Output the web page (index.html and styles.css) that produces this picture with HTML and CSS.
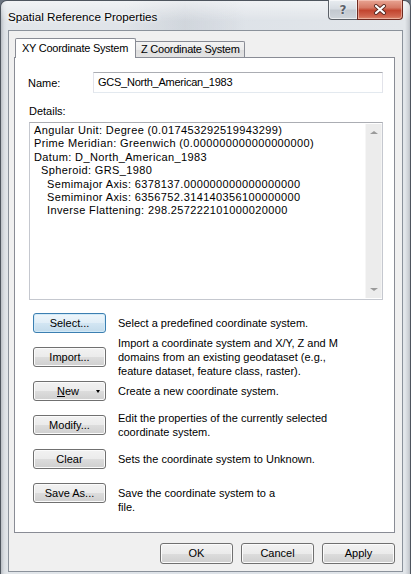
FILE: index.html
```html
<!DOCTYPE html>
<html>
<head>
<meta charset="utf-8">
<link rel="stylesheet" href="styles.css">
</head>
<body>
<div class="window">
  <div class="titlebar">
    <div class="title">Spatial Reference Properties</div>
    <div class="caption-buttons">
      <div class="cap help">?</div>
      <div class="cap close">
        <svg width="14" height="11" viewBox="0 0 14 11">
          <path d="M3 2 L11 9 M11 2 L3 9" stroke="#5a2a22" stroke-width="4" stroke-linecap="round"/>
          <path d="M3 2 L11 9 M11 2 L3 9" stroke="#ffffff" stroke-width="2.2" stroke-linecap="round"/>
        </svg>
      </div>
    </div>
  </div>
  <div class="client">
    <div class="tabstrip">
      <div class="tab active">XY Coordinate System</div>
      <div class="tab">Z Coordinate System</div>
    </div>
    <div class="panel">
      <div class="name-row">
        <label class="name-label">Name:</label>
        <div class="input">GCS_North_American_1983</div>
      </div>
      <div class="details-label">Details:</div>
      <div class="details">
        <div class="details-text">
          <div>Angular Unit: Degree (0.017453292519943299)</div>
          <div>Prime Meridian: Greenwich (0.000000000000000000)</div>
          <div>Datum: D_North_American_1983</div>
          <div class="ind1">Spheroid: GRS_1980</div>
          <div class="ind2">Semimajor Axis: 6378137.000000000000000000</div>
          <div class="ind2">Semiminor Axis: 6356752.314140356100000000</div>
          <div class="ind2">Inverse Flattening: 298.257222101000020000</div>
        </div>
        <div class="scrollbar">
          <span class="arrow-up"></span>
          <span class="arrow-down"></span>
        </div>
      </div>
      <div class="actions">
        <div class="row">
          <div class="btn default">Select...</div>
          <div class="desc">Select a predefined coordinate system.</div>
        </div>
        <div class="row">
          <div class="btn">Import...</div>
          <div class="desc">Import a coordinate system and X/Y, Z and M<br>domains from an existing geodataset (e.g.,<br>feature dataset, feature class, raster).</div>
        </div>
        <div class="row">
          <div class="btn split"><span class="btn-label"><u>N</u>ew</span><span class="drop"></span></div>
          <div class="desc">Create a new coordinate system.</div>
        </div>
        <div class="row">
          <div class="btn">Modify...</div>
          <div class="desc">Edit the properties of the currently selected<br>coordinate system.</div>
        </div>
        <div class="row">
          <div class="btn">Clear</div>
          <div class="desc">Sets the coordinate system to Unknown.</div>
        </div>
        <div class="row">
          <div class="btn">Save As...</div>
          <div class="desc desc-top">Save the coordinate system to a<br>file.</div>
        </div>
      </div>
    </div>
    <div class="footer">
      <div class="btn wide">OK</div>
      <div class="btn wide">Cancel</div>
      <div class="btn wide">Apply</div>
    </div>
  </div>
</div>
</body>
</html>
```
FILE: styles.css
```css
html, body {
  margin: 0;
  padding: 0;
  overflow: hidden;
  background: #6b7480;
}
body {
  font-family: "Liberation Sans", Arial, sans-serif;
  font-size: 11px;
  color: #000;
}
.window {
  width: 411px;
  height: 574px;
  box-sizing: border-box;
  border: 1px solid #4e555e;
  border-bottom: none;
  border-radius: 7px 7px 0 0;
  background: linear-gradient(90deg, #b9bec4 0px, #d9dde2 3px, #e2e6ea 6px, #dde2e8 50%, #e2e6ea 404px, #c8ccd1 408px, #9ca2a9 411px);
  display: flex;
  flex-direction: column;
}
.titlebar {
  height: 29px;
  display: flex;
  justify-content: space-between;
  align-items: flex-start;
  background: linear-gradient(180deg, rgba(255,255,255,0.55), rgba(255,255,255,0) 70%),
              linear-gradient(90deg, rgba(0,0,0,0) 30%, rgba(120,128,140,0.12) 45%, rgba(0,0,0,0) 60%);
  border-radius: 6px 6px 0 0;
}
.title {
  padding: 8px 0 0 7px;
  font-size: 11.7px;
  line-height: 15px;
  color: #000;
  text-shadow: 0 0 6px #fff, 0 0 3px #fff;
}
.caption-buttons {
  display: flex;
  margin-right: 7px;
  margin-top: -1px;
}
.cap {
  height: 20px;
  box-sizing: border-box;
  display: flex;
  align-items: center;
  justify-content: center;
  border: 1px solid #5c6168;
  border-top: none;
}
.help {
  width: 29px;
  border-right: none;
  border-radius: 0 0 0 4px;
  background: linear-gradient(180deg, #e9edf1 0%, #d7dce2 45%, #c3c9d0 55%, #cfd5db 100%);
  box-shadow: inset 0 0 0 1px rgba(255,255,255,0.6);
  font-family: "DejaVu Sans", sans-serif;
  font-weight: bold;
  font-size: 12px;
  color: #5a6069;
  text-shadow: 0 0 2px #fff;
}
.close {
  width: 46px;
  border-radius: 0 0 4px 0;
  border-color: #6e2a20;
  background: linear-gradient(180deg, #e8a493 0%, #d67a66 40%, #c2452f 55%, #d0654f 85%, #dd8a6e 100%);
  box-shadow: inset 0 0 0 1px rgba(255,220,210,0.5);
}
.client {
  flex: 1;
  margin: 0 7px 2px 7px;
  border: 1px solid #8b929b;
  background: #f0f0f0;
  padding: 7px 7px 0 5px;
  display: flex;
  flex-direction: column;
}
.tabstrip {
  display: flex;
  align-items: flex-end;
  height: 19px;
  margin-left: 1px;
}
.tab {
  box-sizing: border-box;
  height: 16px;
  padding: 0 4px 0 5px;
  border: 1px solid #898c95;
  border-bottom: none;
  border-left: none;
  border-radius: 0 2px 0 0;
  background: linear-gradient(180deg, #f3f3f3 0%, #ebebeb 50%, #dedede 50%, #e3e3e3 100%);
  font-size: 11px;
  letter-spacing: -0.25px;
  line-height: 15px;
  white-space: nowrap;
}
.tab.active {
  height: 20px;
  margin-bottom: -1px;
  position: relative;
  z-index: 1;
  background: #fff;
  border-left: 1px solid #898c95;
  border-radius: 2px 2px 0 0;
  padding: 0 7px 0 6px;
  line-height: 19px;
}
.panel {
  box-sizing: border-box;
  height: 476px;
  width: 381px;
  border: 1px solid #898c95;
  background: #fff;
  padding: 14px 11px 0 14px;
}
.name-row {
  display: flex;
  align-items: center;
  justify-content: space-between;
  height: 21px;
}
.name-label {
  margin-left: -1px;
}
.input {
  box-sizing: border-box;
  width: 290px;
  height: 21px;
  border: 1px solid #e2e3ea;
  border-top-color: #abadb3;
  border-bottom-color: #e3e9ef;
  padding: 0 4px;
  line-height: 18px;
  letter-spacing: -0.25px;
}
.details-label {
  margin-top: 11px;
  line-height: 14px;
}
.details {
  margin-top: 4px;
  box-sizing: border-box;
  height: 178px;
  border: 1px solid #c5c8cf;
  border-top-color: #abadb3;
  display: flex;
}
.details-text {
  flex: 1;
  padding: 1px 0 0 4px;
  line-height: 13.4px;
  letter-spacing: 0.37px;
  white-space: nowrap;
}
.ind1 { padding-left: 7px; }
.ind2 { padding-left: 13px; }
.scrollbar {
  width: 17px;
  margin: 1px 0 1px 0;
  box-sizing: border-box;
  background: #ececec;
  border-left: 1px solid #f6f6f6;
  border-right: 1px solid #f4f4f4;
  display: flex;
  flex-direction: column;
  justify-content: space-between;
  align-items: center;
  padding: 7px 0 7px 0;
}
.arrow-up {
  width: 0; height: 0;
  border-left: 4px solid transparent;
  border-right: 4px solid transparent;
  border-bottom: 3px solid #9a9a9a;
}
.arrow-down {
  width: 0; height: 0;
  border-left: 4px solid transparent;
  border-right: 4px solid transparent;
  border-top: 3px solid #9a9a9a;
}
.actions {
  margin-top: 6px;
}
.row {
  height: 34px;
  display: flex;
  align-items: center;
}
.btn {
  box-sizing: border-box;
  width: 73px;
  height: 20px;
  margin-left: 4px;
  border: 1px solid #707070;
  border-radius: 3px;
  background: linear-gradient(180deg, #f2f2f2 0%, #ebebeb 50%, #dddddd 50%, #cfcfcf 100%);
  box-shadow: inset 0 0 0 1px #fbfbfb;
  text-align: center;
  line-height: 18px;
  flex-shrink: 0;
}
.btn.default {
  border-color: #3c7fb1;
  background: linear-gradient(180deg, #eef6fb 0%, #e1eef7 50%, #d3e6f3 50%, #c3dbeb 100%);
  box-shadow: inset 0 0 0 1px #d2eaf8;
}
.btn.split {
  display: flex;
  align-items: center;
}
.btn-label {
  flex: 1;
  padding-left: 6px;
}
.drop {
  width: 0; height: 0;
  border-left: 2.5px solid transparent;
  border-right: 2.5px solid transparent;
  border-top: 3px solid #000;
  margin-right: 5px;
}
.desc {
  margin-left: 12px;
  line-height: 14px;
  white-space: nowrap;
}
.desc-top {
  align-self: flex-start;
  margin-top: 10px;
  height: 28px;
}
.footer {
  display: flex;
  justify-content: flex-end;
  gap: 8px;
  margin-top: 10px;
}
.btn.wide {
  height: 21px;
  margin-left: 0;
  line-height: 19px;
}
```
